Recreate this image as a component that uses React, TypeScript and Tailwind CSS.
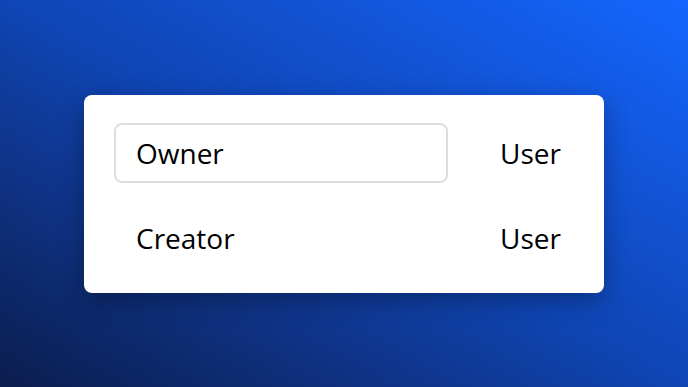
export default function App() {
  const rows = [
    { name: "Owner", role: "User", selected: true },
    { name: "Creator", role: "User", selected: false },
  ];
  return (
    <div
      className="w-[688px] h-[387px] flex items-center justify-center bg-gradient-to-tr from-[#0b1d4e] via-[#0f45b4] to-[#1566ff] text-black"
      style={{ fontFamily: '"Open Sans", "Noto Sans", sans-serif' }}
    >
      <div className="w-[520px] h-[198px] bg-white rounded-[8px] shadow-[0_8px_24px_rgba(0,0,0,0.3)] pt-[28px] pb-[25px] px-[30px] flex flex-col gap-[25px]">
        {rows.map((r) => (
          <div key={r.name} className="flex items-center h-[60px]">
            <div
              className={
                "w-[334px] h-[60px] flex items-center px-[20px] rounded-[8px] border-2 " +
                (r.selected ? "border-[#dddddd]" : "border-transparent")
              }
            >
              <span className="text-[28px] leading-none">{r.name}</span>
            </div>
            <div className="flex-1 flex items-center pl-[52px]">
              <span className="text-[28px] leading-none">{r.role}</span>
            </div>
          </div>
        ))}
      </div>
    </div>
  );
}
